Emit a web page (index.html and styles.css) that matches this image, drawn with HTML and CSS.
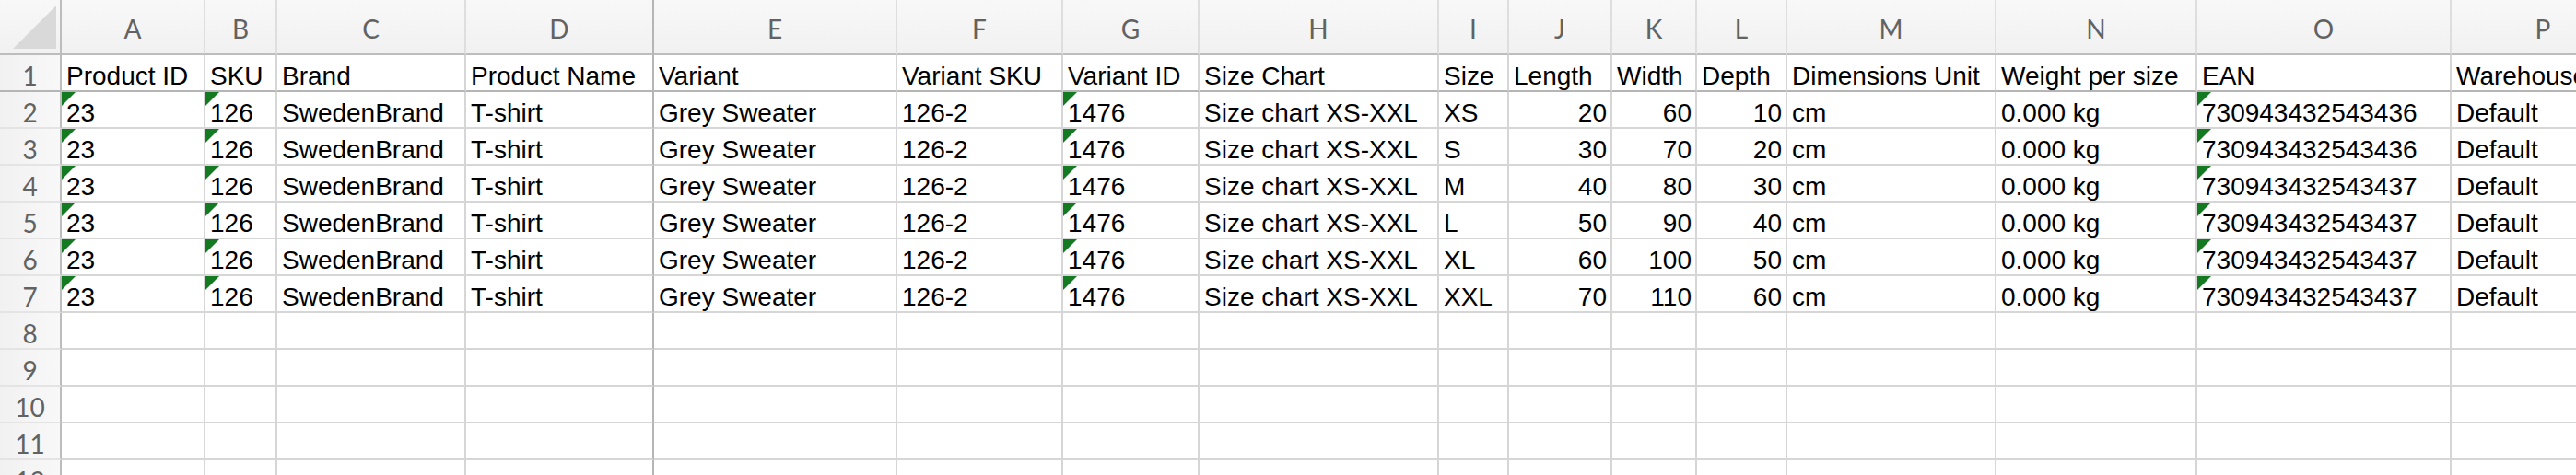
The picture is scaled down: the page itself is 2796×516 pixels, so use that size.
FILE: index.html
```html
<!DOCTYPE html>
<html lang="en">
<head>
<meta charset="utf-8">
<title>Products sheet</title>
<link rel="stylesheet" href="styles.css">
</head>
<body>
<div class="sheet">
  <div class="corner"><span class="tri"></span></div>
  <div class="ch">A</div><div class="ch">B</div><div class="ch">C</div><div class="ch fz">D</div><div class="ch">E</div><div class="ch">F</div><div class="ch">G</div><div class="ch">H</div><div class="ch">I</div><div class="ch">J</div><div class="ch">K</div><div class="ch">L</div><div class="ch">M</div><div class="ch">N</div><div class="ch">O</div><div class="ch">P</div>

  <div class="rh top">1</div>
  <div class="c top">Product ID</div><div class="c top">SKU</div><div class="c top">Brand</div><div class="c top fz">Product Name</div><div class="c top">Variant</div><div class="c top">Variant SKU</div><div class="c top">Variant ID</div><div class="c top">Size Chart</div><div class="c top">Size</div><div class="c top">Length</div><div class="c top">Width</div><div class="c top">Depth</div><div class="c top">Dimensions Unit</div><div class="c top">Weight per size</div><div class="c top">EAN</div><div class="c top">Warehouse</div>

  <div class="rh">2</div>
  <div class="c f">23</div><div class="c f">126</div><div class="c">SwedenBrand</div><div class="c fz">T-shirt</div><div class="c">Grey Sweater</div><div class="c">126-2</div><div class="c f">1476</div><div class="c">Size chart XS-XXL</div><div class="c">XS</div><div class="c r">20</div><div class="c r">60</div><div class="c r">10</div><div class="c">cm</div><div class="c">0.000 kg</div><div class="c f">730943432543436</div><div class="c">Default</div>

  <div class="rh">3</div>
  <div class="c f">23</div><div class="c f">126</div><div class="c">SwedenBrand</div><div class="c fz">T-shirt</div><div class="c">Grey Sweater</div><div class="c">126-2</div><div class="c f">1476</div><div class="c">Size chart XS-XXL</div><div class="c">S</div><div class="c r">30</div><div class="c r">70</div><div class="c r">20</div><div class="c">cm</div><div class="c">0.000 kg</div><div class="c f">730943432543436</div><div class="c">Default</div>

  <div class="rh">4</div>
  <div class="c f">23</div><div class="c f">126</div><div class="c">SwedenBrand</div><div class="c fz">T-shirt</div><div class="c">Grey Sweater</div><div class="c">126-2</div><div class="c f">1476</div><div class="c">Size chart XS-XXL</div><div class="c">M</div><div class="c r">40</div><div class="c r">80</div><div class="c r">30</div><div class="c">cm</div><div class="c">0.000 kg</div><div class="c f">730943432543437</div><div class="c">Default</div>

  <div class="rh">5</div>
  <div class="c f">23</div><div class="c f">126</div><div class="c">SwedenBrand</div><div class="c fz">T-shirt</div><div class="c">Grey Sweater</div><div class="c">126-2</div><div class="c f">1476</div><div class="c">Size chart XS-XXL</div><div class="c">L</div><div class="c r">50</div><div class="c r">90</div><div class="c r">40</div><div class="c">cm</div><div class="c">0.000 kg</div><div class="c f">730943432543437</div><div class="c">Default</div>

  <div class="rh">6</div>
  <div class="c f">23</div><div class="c f">126</div><div class="c">SwedenBrand</div><div class="c fz">T-shirt</div><div class="c">Grey Sweater</div><div class="c">126-2</div><div class="c f">1476</div><div class="c">Size chart XS-XXL</div><div class="c">XL</div><div class="c r">60</div><div class="c r">100</div><div class="c r">50</div><div class="c">cm</div><div class="c">0.000 kg</div><div class="c f">730943432543437</div><div class="c">Default</div>

  <div class="rh">7</div>
  <div class="c f">23</div><div class="c f">126</div><div class="c">SwedenBrand</div><div class="c fz">T-shirt</div><div class="c">Grey Sweater</div><div class="c">126-2</div><div class="c f">1476</div><div class="c">Size chart XS-XXL</div><div class="c">XXL</div><div class="c r">70</div><div class="c r">110</div><div class="c r">60</div><div class="c">cm</div><div class="c">0.000 kg</div><div class="c f">730943432543437</div><div class="c">Default</div>

  <div class="rh">8</div>
  <div class="c"></div><div class="c"></div><div class="c"></div><div class="c fz"></div><div class="c"></div><div class="c"></div><div class="c"></div><div class="c"></div><div class="c"></div><div class="c"></div><div class="c"></div><div class="c"></div><div class="c"></div><div class="c"></div><div class="c"></div><div class="c"></div>

  <div class="rh">9</div>
  <div class="c"></div><div class="c"></div><div class="c"></div><div class="c fz"></div><div class="c"></div><div class="c"></div><div class="c"></div><div class="c"></div><div class="c"></div><div class="c"></div><div class="c"></div><div class="c"></div><div class="c"></div><div class="c"></div><div class="c"></div><div class="c"></div>

  <div class="rh">10</div>
  <div class="c"></div><div class="c"></div><div class="c"></div><div class="c fz"></div><div class="c"></div><div class="c"></div><div class="c"></div><div class="c"></div><div class="c"></div><div class="c"></div><div class="c"></div><div class="c"></div><div class="c"></div><div class="c"></div><div class="c"></div><div class="c"></div>

  <div class="rh">11</div>
  <div class="c"></div><div class="c"></div><div class="c"></div><div class="c fz"></div><div class="c"></div><div class="c"></div><div class="c"></div><div class="c"></div><div class="c"></div><div class="c"></div><div class="c"></div><div class="c"></div><div class="c"></div><div class="c"></div><div class="c"></div><div class="c"></div>

  <div class="rh">12</div>
  <div class="c"></div><div class="c"></div><div class="c"></div><div class="c fz"></div><div class="c"></div><div class="c"></div><div class="c"></div><div class="c"></div><div class="c"></div><div class="c"></div><div class="c"></div><div class="c"></div><div class="c"></div><div class="c"></div><div class="c"></div><div class="c"></div>
</div>
</body>
</html>
```

FILE: styles.css
```css
html, body {
  margin: 0;
  padding: 0;
  background: #ffffff;
  overflow: hidden;
}

body {
  width: 2796px;
  height: 516px;
}

.sheet {
  display: grid;
  grid-template-columns: 67px 156px 78px 205px 204px 264px 180px 148px 260px 76px 112px 92px 98px 227px 218px 276px 200px;
  grid-template-rows: 60px repeat(12, 40px);
  width: max-content;
  font-family: "Liberation Sans", Arial, sans-serif;
  font-size: 28px;
  color: #000000;
}

.corner {
  box-sizing: border-box;
  position: relative;
  background: linear-gradient(#f8f8f8, #f1f1f1);
  border-right: 2px solid #bdbdbd;
  border-bottom: 2px solid #bdbdbd;
}

.tri {
  position: absolute;
  right: 4px;
  bottom: 5px;
  width: 0;
  height: 0;
  border-left: 47px solid transparent;
  border-bottom: 47px solid #d9d9d9;
}

.ch {
  box-sizing: border-box;
  display: flex;
  align-items: center;
  justify-content: center;
  padding-top: 4px;
  font-family: Lato, "Open Sans", sans-serif;
  font-size: 28px;
  color: #626262;
  background: linear-gradient(#f8f8f8, #f1f1f1);
  border-right: 2px solid #dedede;
  border-bottom: 2px solid #bdbdbd;
}

.rh {
  box-sizing: border-box;
  display: flex;
  align-items: flex-end;
  justify-content: center;
  line-height: 32px;
  font-family: Lato, "Open Sans", sans-serif;
  font-size: 28px;
  color: #626262;
  background: linear-gradient(to right, #f1f1f1, #f8f8f8);
  border-right: 2px solid #bdbdbd;
  border-bottom: 2px solid #e4e4e4;
}

.c {
  box-sizing: border-box;
  position: relative;
  display: flex;
  align-items: flex-end;
  padding: 0 4px 0 5px;
  line-height: 30px;
  white-space: nowrap;
  overflow: hidden;
  border-right: 2px solid #d6d6d6;
  border-bottom: 2px solid #d6d6d6;
}

.c.r {
  justify-content: flex-end;
}

.c.f::before {
  content: "";
  position: absolute;
  left: 0;
  top: 0;
  width: 0;
  height: 0;
  border-top: 15px solid #137a22;
  border-right: 15px solid transparent;
}

.top {
  border-bottom-color: #b5b5b5;
}

.rh.top {
  border-bottom: 2px solid #b5b5b5;
}

.fz {
  border-right-color: #b5b5b5;
}
```
